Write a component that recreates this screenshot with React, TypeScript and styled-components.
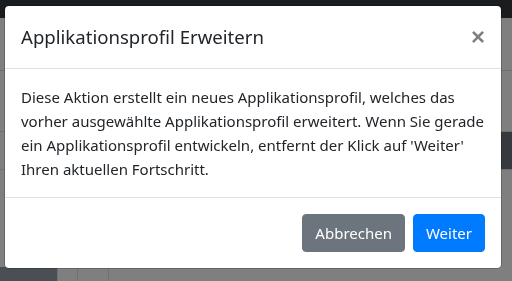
import React from 'react';
import styled, { createGlobalStyle } from 'styled-components';

const GlobalStyle = createGlobalStyle`
  html, body {
    margin: 0;
    padding: 0;
    background: #fff;
    font-family: "Segoe UI", "Noto Sans", Roboto, "Liberation Sans", sans-serif;
    color: #212529;
  }
`;

// page under the backdrop
const Page = styled.div`
  width: 512px;
  height: 281px;
  overflow: hidden;
  display: flex;
  flex-direction: column;
`;

const Navbar = styled.div`
  height: 18px;
  background: #343a40;
  flex-shrink: 0;
`;

const Content = styled.div`
  flex: 1;
  display: grid;
  grid-template-columns: 57px 20px 31px 21px 1fr;
  grid-template-rows: 52px 61px 38px 98px 1fr;
`;

const Cell = styled.div<{ $top?: boolean; $dark?: string; $left?: boolean; $span?: number }>`
  border-top: ${(p) => (p.$top ? '1px solid #dee2e6' : 'none')};
  border-left: ${(p) => (p.$left ? '1px solid #dee2e6' : 'none')};
  background: ${(p) => p.$dark ?? 'transparent'};
  grid-column: span ${(p) => p.$span ?? 1};
`;

const Backdrop = styled.div`
  position: fixed;
  inset: 0;
  background: rgba(0, 0, 0, 0.5);
`;

const ModalWrap = styled.div`
  position: fixed;
  inset: 0;
  padding: 5px 0 0 4px;
`;

const ModalContent = styled.div`
  width: 498px;
  box-sizing: border-box;
  background: #fff;
  border: 1px solid rgba(0, 0, 0, 0.2);
  border-radius: 4.8px;
  display: flex;
  flex-direction: column;
  background-clip: padding-box;
`;

const Header = styled.div`
  display: flex;
  align-items: flex-start;
  justify-content: space-between;
  padding: 16px;
  border-bottom: 1px solid #dee2e6;
`;

const Title = styled.h5`
  margin: 0;
  font-size: 18.6px;
  font-weight: 400;
  line-height: 30px;
  white-space: nowrap;
`;

const Close = styled.button`
  padding: 16px;
  margin: -16px -16px -16px auto;
  background: transparent;
  border: 0;
  font-family: "Liberation Sans", sans-serif;
  font-size: 24px;
  font-weight: 700;
  line-height: 30px;
  color: #000;
  opacity: 0.5;
  cursor: pointer;
`;

const Body = styled.div`
  padding: 16px;
  line-height: 24px;
`;

const Text = styled.p`
  margin: 0;
  white-space: nowrap;
  font-size: 15px;
`;

const Footer = styled.div`
  display: flex;
  justify-content: flex-end;
  align-items: center;
  padding: 12px;
  border-top: 1px solid #dee2e6;
`;

const Button = styled.button<{ $variant: 'secondary' | 'primary' }>`
  margin: 4px;
  padding: 6px 12px;
  height: 38px;
  box-sizing: border-box;
  font-family: inherit;
  font-size: 15px;
  line-height: 24px;
  color: #fff;
  border: 1px solid ${(p) => (p.$variant === 'primary' ? '#007bff' : '#6c757d')};
  background: ${(p) => (p.$variant === 'primary' ? '#007bff' : '#6c757d')};
  border-radius: 4px;
  cursor: pointer;
`;

const App: React.FC = () => (
  <>
    <GlobalStyle />
    <Page>
      <Navbar />
      <Content>
        <Cell $span={5} />
        <Cell $top $span={5} />
        <Cell $top $span={4} />
        <Cell $top $dark="#6c757d" />
        <Cell $top $span={5} />
        <Cell $dark="#949ea8" />
        <Cell $left />
        <Cell $left />
        <Cell $left />
        <Cell />
      </Content>
    </Page>
    <Backdrop />
    <ModalWrap>
      <ModalContent>
        <Header>
          <Title>Applikationsprofil Erweitern</Title>
          <Close aria-label="Close">×</Close>
        </Header>
        <Body>
          <Text>
            Diese Aktion erstellt ein neues Applikationsprofil, welches das
            <br />
            vorher ausgewählte Applikationsprofil erweitert. Wenn Sie gerade
            <br />
            ein Applikationsprofil entwickeln, entfernt der Klick auf 'Weiter'
            <br />
            Ihren aktuellen Fortschritt.
          </Text>
        </Body>
        <Footer>
          <Button $variant="secondary">Abbrechen</Button>
          <Button $variant="primary">Weiter</Button>
        </Footer>
      </ModalContent>
    </ModalWrap>
  </>
);

export default App;
